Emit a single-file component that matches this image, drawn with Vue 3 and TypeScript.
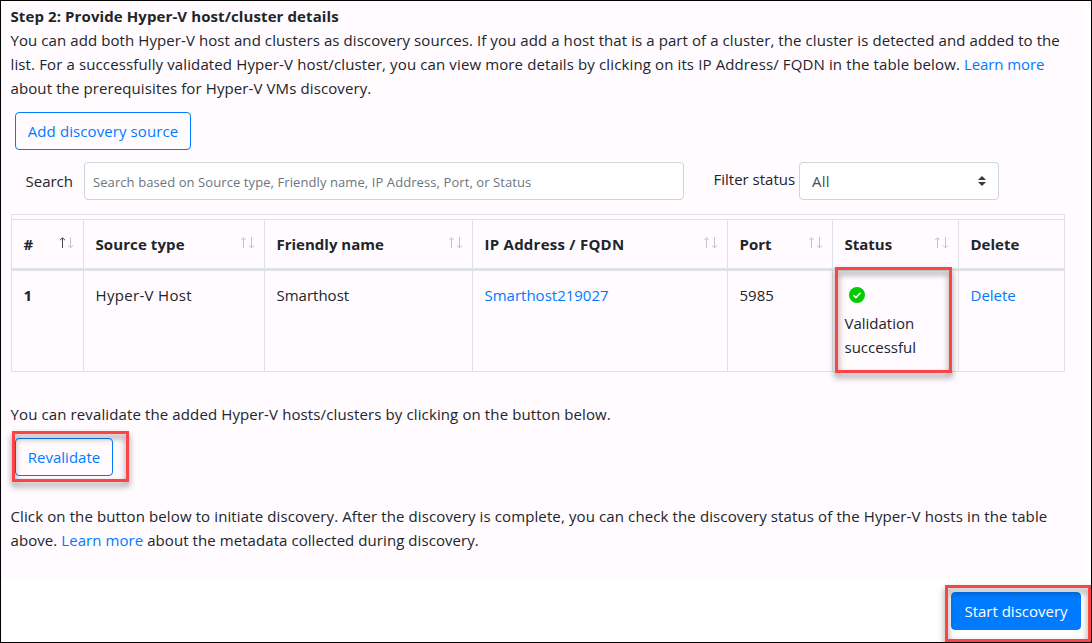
<script setup lang="ts">
interface Column {
  key: string
  label: string
  sort: 'none' | 'both' | 'asc'
}

const columns: Column[] = [
  { key: 'num', label: '#', sort: 'asc' },
  { key: 'type', label: 'Source type', sort: 'both' },
  { key: 'name', label: 'Friendly name', sort: 'both' },
  { key: 'ip', label: 'IP Address / FQDN', sort: 'both' },
  { key: 'port', label: 'Port', sort: 'both' },
  { key: 'status', label: 'Status', sort: 'both' },
  { key: 'del', label: 'Delete', sort: 'none' },
]
</script>

<template>
  <div class="page">
    <main class="panel">
      <h1 class="title">Step 2: Provide Hyper-V host/cluster details</h1>
      <p class="copy">
        <span class="line l1">You can add both Hyper-V host and clusters as discovery sources. If you add a host that is a part of a cluster, the cluster is detected and added to the</span>
        <span class="line l2">list. For a successfully validated Hyper-V host/cluster, you can view more details by clicking on its IP Address/ FQDN in the table below. <a>Learn more</a></span>
        <span class="line l3">about the prerequisites for Hyper-V VMs discovery.</span>
      </p>
      <button class="btn add">Add discovery source</button>
      <div class="filters">
        <label class="search-label">Search</label>
        <input class="search" type="text" placeholder="Search based on Source type, Friendly name, IP Address, Port, or Status" />
        <label class="filter-label">Filter status</label>
        <div class="select">
          <span>All</span>
          <svg width="8" height="10" viewBox="0 0 8 10"><path d="M0 4 4 0l4 4zM0 6h8L4 10z" fill="#343a40" /></svg>
        </div>
      </div>
      <div class="table">
        <div class="row head">
          <div v-for="c in columns" :key="c.key" class="cell">
            <span :class="'h-' + c.key">{{ c.label }}</span>
            <svg v-if="c.sort !== 'none'" class="sort" width="14" height="12" viewBox="0 0 14 12" fill="none">
              <path d="M3.5 11V1M1 3.2 3.5.8 6 3.2" :stroke="c.sort === 'asc' ? '#44474a' : '#c4c3c6'" />
              <path d="M11.5 0v11M9 8.4l2.5 2.4L14 8.4" stroke="#c4c3c6" />
            </svg>
          </div>
        </div>
        <div class="row body">
          <div class="cell"><b>1</b></div>
          <div class="cell"><span class="c-type">Hyper-V Host</span></div>
          <div class="cell"><span>Smarthost</span></div>
          <div class="cell"><a>Smarthost219027</a></div>
          <div class="cell"><span>5985</span></div>
          <div class="cell">
            <svg class="ok" width="16" height="16" viewBox="0 0 16 16">
              <circle cx="8" cy="8" r="8" fill="#00cc00" />
              <path d="m4.5 8.2 2.4 2.4 4.7-4.8" fill="none" stroke="#fff" stroke-width="1.6" />
            </svg>
            <span class="line">Validation</span>
            <span class="line">successful</span>
            <i class="mark mark-status"></i>
          </div>
          <div class="cell"><a>Delete</a></div>
        </div>
      </div>
      <p class="copy revalidate-copy"><span class="line l4">You can revalidate the added Hyper-V hosts/clusters by clicking on the button below.</span></p>
      <div class="revalidate">
        <button class="btn">Revalidate</button>
        <i class="mark mark-revalidate"></i>
      </div>
      <p class="copy discover-copy">
        <span class="line l5">Click on the button below to initiate discovery. After the discovery is complete, you can check the discovery status of the Hyper-V hosts in the table</span>
        <span class="line l6">above. <a>Learn more</a> about the metadata collected during discovery.</span>
      </p>
    </main>
    <footer class="footer">
      <div class="start">
        <button class="btn primary">Start discovery</button>
        <i class="mark mark-start"></i>
      </div>
    </footer>
  </div>
</template>

<style>
body { margin: 0; }
</style>

<style scoped>
* { box-sizing: border-box; }
.page {
  width: 1092px;
  height: 643px;
  border: 1px solid #000;
  background: #fff;
  overflow: hidden;
  color: #212529;
  font: 15px/24px "Open Sans", "Noto Sans", sans-serif;
}
.panel {
  width: 1084px;
  height: 578px;
  padding: 3px 0 0 10px;
  background: #fffbff;
}
.title { margin: 0 0 0 -0.5px; font-size: 15px; line-height: 24px; font-weight: 700; letter-spacing: 0.1px; }
.copy { margin: 0 0 0 -0.5px; }
.line { display: block; white-space: nowrap; }
.l1 { letter-spacing: 0.083px; }
.l2 { letter-spacing: 0.124px; }
.l2 a { letter-spacing: -0.1px; }
.l3 { letter-spacing: 0.11px; }
.l4 { letter-spacing: 0.118px; }
.l5 { letter-spacing: 0.117px; }
.l6 { letter-spacing: 0.068px; }
a { color: #007bff; text-decoration: none; }
.btn {
  display: flex;
  align-items: center;
  justify-content: center;
  width: 98px;
  height: 38px;
  padding: 0;
  border: 1px solid #007bff;
  border-radius: 4px;
  background: transparent;
  color: #007bff;
  font: inherit;
  white-space: nowrap;
}
.btn.add { width: 176px; margin: 12px 0 0 4px; letter-spacing: 0.09px; }
.btn.primary { width: 130px; background: #007bff; color: #fff; }
.filters { display: flex; height: 38px; margin-top: 12px; }
.search-label { width: 73px; padding: 7px 0 0 14.5px; white-space: nowrap; }
.search {
  width: 600px;
  height: 38px;
  padding: 1px 8px 0;
  border: 1px solid #ced4da;
  border-radius: 4px;
  background: #fff;
  font: 13px/20px "Open Sans", "Noto Sans", sans-serif;
  letter-spacing: 0.086px;
}
.search::placeholder { color: #6c757d; opacity: 1; }
.filter-label { width: 115px; padding: 5px 0 0 29.5px; white-space: nowrap; }
.select {
  display: flex;
  align-items: center;
  justify-content: space-between;
  width: 200px;
  height: 38px;
  padding: 0 12px;
  border: 1px solid #ced4da;
  border-radius: 4px;
  background: #fff;
  color: #495057;
  letter-spacing: 0.3px;
}
.table {
  width: 1054px;
  height: 158px;
  margin-top: 14px;
  padding-top: 4px;
  border: 1px solid #dee2e6;
}
.row { display: grid; grid-template-columns: 72px 181px 208px 255px 105px 126px 105px; }
.head { height: 52px; border-top: 1px solid #dee2e6; border-bottom: 3px solid #dee2e6; font-weight: 700; }
.body { height: 100px; }
.cell { position: relative; padding: 12px 0 0 11.5px; border-right: 1px solid #dee2e6; white-space: nowrap; }
.cell:last-child { border-right: 0; }
.head .cell { display: flex; justify-content: space-between; padding-right: 10px; }
.h-type { letter-spacing: 0.09px; }
.h-ip { letter-spacing: 0.25px; }
.c-type { letter-spacing: 0.33px; }
.sort { margin-top: 5px; }
.ok { display: block; margin: 4px 0 8px 4.5px; }
.mark { position: absolute; border: 3px solid #fb4545; filter: drop-shadow(0 4px 3px rgba(0, 0, 0, 0.5)); pointer-events: none; }
.mark-status { left: 2px; top: -4px; width: 117px; height: 106px; }
.revalidate-copy { margin-top: 30px; }
.revalidate { position: relative; width: 98px; margin: 12px 0 0 4px; }
.mark-revalidate { left: -3px; top: -7px; width: 117px; height: 51px; }
.discover-copy { margin-top: 28px; }
.footer { display: flex; justify-content: flex-end; padding: 13px 10px 0 0; }
.start { position: relative; }
.mark-start { left: -6px; top: -7px; width: 146px; height: 57px; }
</style>
